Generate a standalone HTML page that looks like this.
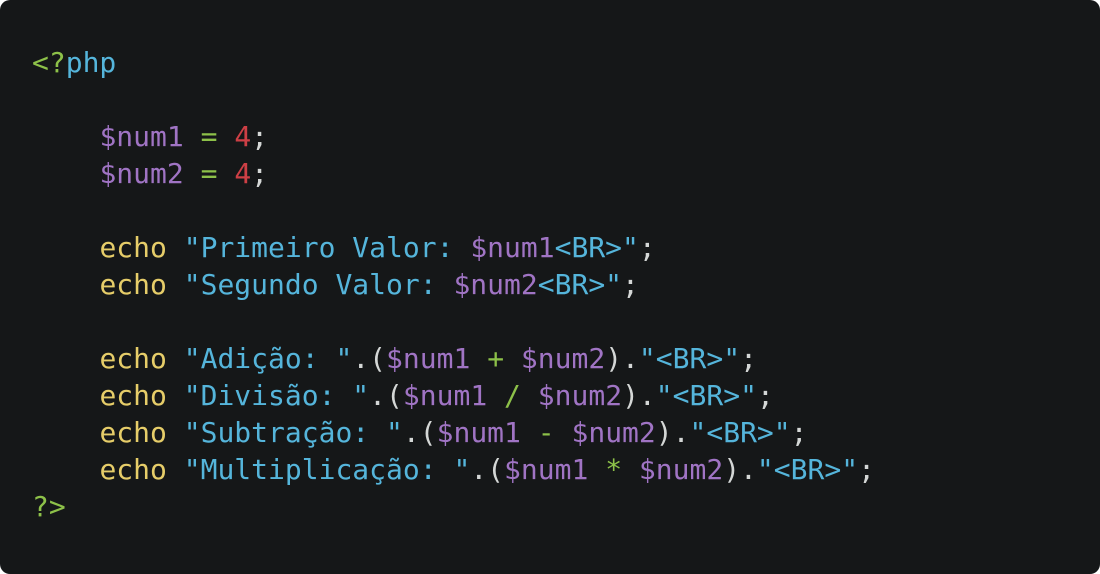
<!DOCTYPE html>
<html><head><meta charset="utf-8"><style>
html,body{margin:0;padding:0;background:#fff;width:1100px;height:574px;overflow:hidden}
.box{position:absolute;left:0;top:0;width:1100px;height:574px;background:#151718;border-radius:10px}
pre{margin:0;position:absolute;left:32px;top:44px;font-family:"DejaVu Sans Mono","Liberation Mono",monospace;font-size:28px;line-height:37px;color:#d4d7d6;white-space:pre}
.g{color:#8dc149}.c{color:#55b5db}.p{color:#a074c4}.r{color:#cd3f45}.y{color:#e6cd69}
</style></head><body><div class="box"><pre><span class="g">&lt;?</span><span class="c">php</span>

    <span class="p">$num1</span> <span class="g">=</span> <span class="r">4</span>;
    <span class="p">$num2</span> <span class="g">=</span> <span class="r">4</span>;

    <span class="y">echo</span> <span class="c">"Primeiro Valor: </span><span class="p">$num1</span><span class="c">&lt;BR&gt;"</span>;
    <span class="y">echo</span> <span class="c">"Segundo Valor: </span><span class="p">$num2</span><span class="c">&lt;BR&gt;"</span>;

    <span class="y">echo</span> <span class="c">"Adição: "</span>.(<span class="p">$num1</span> <span class="g">+</span> <span class="p">$num2</span>).<span class="c">"&lt;BR&gt;"</span>;
    <span class="y">echo</span> <span class="c">"Divisão: "</span>.(<span class="p">$num1</span> <span class="g">/</span> <span class="p">$num2</span>).<span class="c">"&lt;BR&gt;"</span>;
    <span class="y">echo</span> <span class="c">"Subtração: "</span>.(<span class="p">$num1</span> <span class="g">-</span> <span class="p">$num2</span>).<span class="c">"&lt;BR&gt;"</span>;
    <span class="y">echo</span> <span class="c">"Multiplicação: "</span>.(<span class="p">$num1</span> <span class="g">*</span> <span class="p">$num2</span>).<span class="c">"&lt;BR&gt;"</span>;
<span class="g">?&gt;</span></pre></div></body></html>
